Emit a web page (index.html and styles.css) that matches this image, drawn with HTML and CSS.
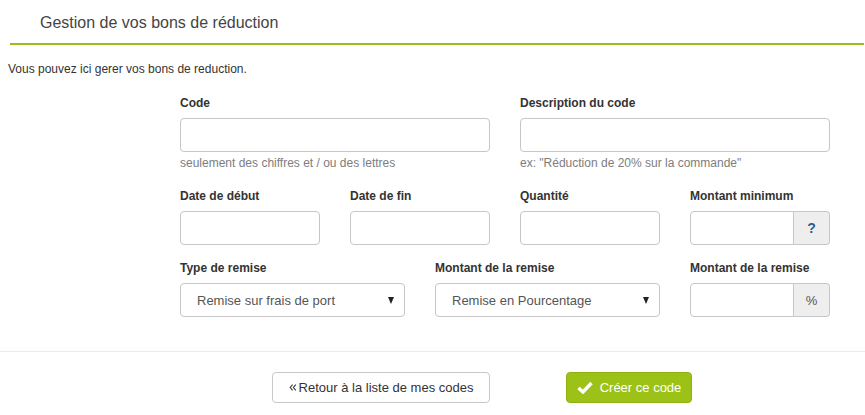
FILE: index.html
```html
<!DOCTYPE html>
<html lang="fr">
<head>
<meta charset="utf-8">
<title>Gestion de vos bons de réduction</title>
<link rel="stylesheet" href="styles.css">
</head>
<body>
<div class="page-header">
  <h1 class="title">Gestion de vos bons de réduction</h1>
</div>
<p class="intro">Vous pouvez ici gerer vos bons de reduction.</p>
<form class="form">
  <div class="row row-2">
    <div class="group">
      <label class="label">Code</label>
      <div class="input"></div>
      <p class="help">seulement des chiffres et / ou des lettres</p>
    </div>
    <div class="group">
      <label class="label">Description du code</label>
      <div class="input"></div>
      <p class="help">ex: "Réduction de 20% sur la commande"</p>
    </div>
  </div>
  <div class="row row-4">
    <div class="group">
      <label class="label">Date de début</label>
      <div class="input"></div>
    </div>
    <div class="group">
      <label class="label">Date de fin</label>
      <div class="input"></div>
    </div>
    <div class="group">
      <label class="label">Quantité</label>
      <div class="input"></div>
    </div>
    <div class="group">
      <label class="label">Montant minimum</label>
      <div class="input-group">
        <div class="input ig-field"></div>
        <span class="addon addon-help">?</span>
      </div>
    </div>
  </div>
  <div class="row row-3">
    <div class="group">
      <label class="label">Type de remise</label>
      <div class="select"><span class="select-text">Remise sur frais de port</span><span class="caret"></span></div>
    </div>
    <div class="group">
      <label class="label">Montant de la remise</label>
      <div class="select"><span class="select-text">Remise en Pourcentage</span><span class="caret"></span></div>
    </div>
    <div class="group">
      <label class="label">Montant de la remise</label>
      <div class="input-group">
        <div class="input ig-field"></div>
        <span class="addon">%</span>
      </div>
    </div>
  </div>
</form>
<div class="divider"></div>
<div class="actions">
  <button class="btn btn-default" type="button">
    <svg class="ico-dbl" viewBox="0 0 10 10" width="8" height="9"><path d="M4.5 1.5 L1.5 5 L4.5 8.5 M8.5 1.5 L5.5 5 L8.5 8.5" fill="none" stroke="#333" stroke-width="1.3"/></svg>Retour à la liste de mes codes
  </button>
  <button class="btn btn-primary" type="button">
    <svg class="ico-check" viewBox="0 0 16 13" width="16" height="13"><path d="M1.5 7 L6 11 L14.5 2" fill="none" stroke="#fff" stroke-width="3.4" stroke-linejoin="miter"/></svg>Créer ce code
  </button>
</div>
</body>
</html>
```
FILE: styles.css
```css
html, body {
  margin: 0;
  padding: 0;
  background: #fff;
}
body {
  font-family: "Liberation Sans", Arial, sans-serif;
  font-size: 12px;
  line-height: 17px;
  color: #333;
  width: 865px;
}
.page-header {
  margin-left: 10px;
  margin-right: 1px;
  border-bottom: 2px solid #99bf1a;
  padding: 12px 0 9px 30px;
}
.title {
  margin: 0;
  font-size: 16px;
  line-height: 22px;
  font-weight: normal;
  color: #444;
}
.intro {
  margin: 16px 0 0 8px;
}
.form {
  margin: 17px 0 0 180px;
  width: 650px;
}
.row {
  display: grid;
  column-gap: 30px;
}
.row-2 { grid-template-columns: 310px 310px; }
.row-4 { grid-template-columns: 140px 140px 140px 140px; margin-top: 16px; }
.row-3 { grid-template-columns: 225px 225px 140px; margin-top: 15px; }
.label {
  display: block;
  font-weight: bold;
  color: #333;
  margin-bottom: 6px;
}
.input {
  box-sizing: border-box;
  height: 34px;
  border: 1px solid #c6c6c6;
  border-radius: 4px;
  background: #fff;
}
.help {
  margin: 3px 0 0;
  color: #7d7d7d;
}
.input-group {
  display: flex;
  height: 34px;
}
.ig-field {
  flex: 1;
  border-radius: 4px 0 0 4px;
}
.addon {
  box-sizing: border-box;
  width: 36px;
  height: 34px;
  border: 1px solid #c6c6c6;
  border-left: 0;
  border-radius: 0 4px 4px 0;
  background: #eee;
  display: flex;
  align-items: center;
  justify-content: center;
  font-size: 13px;
  color: #555;
}
.addon-help {
  font-weight: bold;
  color: #2d5d8a;
  font-size: 14px;
}
.select {
  box-sizing: border-box;
  height: 34px;
  border: 1px solid #c6c6c6;
  border-radius: 4px;
  display: flex;
  align-items: center;
  padding: 0 10px 0 16px;
  font-size: 13px;
  color: #555;
}
.select-text {
  flex: 1;
}
.caret {
  width: 0;
  height: 0;
  border-left: 3.5px solid transparent;
  border-right: 3.5px solid transparent;
  border-top: 7px solid #222;
}
.divider {
  margin-top: 34px;
  height: 1px;
  background: #ebebeb;
}
.actions {
  display: flex;
  gap: 76px;
  margin: 20px 0 0 272px;
}
.btn {
  box-sizing: border-box;
  height: 31px;
  border-radius: 4px;
  font-family: "Liberation Sans", Arial, sans-serif;
  font-size: 13px;
  display: flex;
  align-items: center;
  justify-content: center;
  padding: 0;
  cursor: pointer;
}
.btn-default {
  width: 218px;
  background: #fff;
  border: 1px solid #c8c8c8;
  color: #333;
}
.btn-primary {
  width: 126px;
  background: #9dc217;
  border: 1px solid #8fb012;
  color: #fff;
}
.ico-dbl {
  margin-right: 2px;
}
.ico-check {
  margin-right: 7px;
}
```
